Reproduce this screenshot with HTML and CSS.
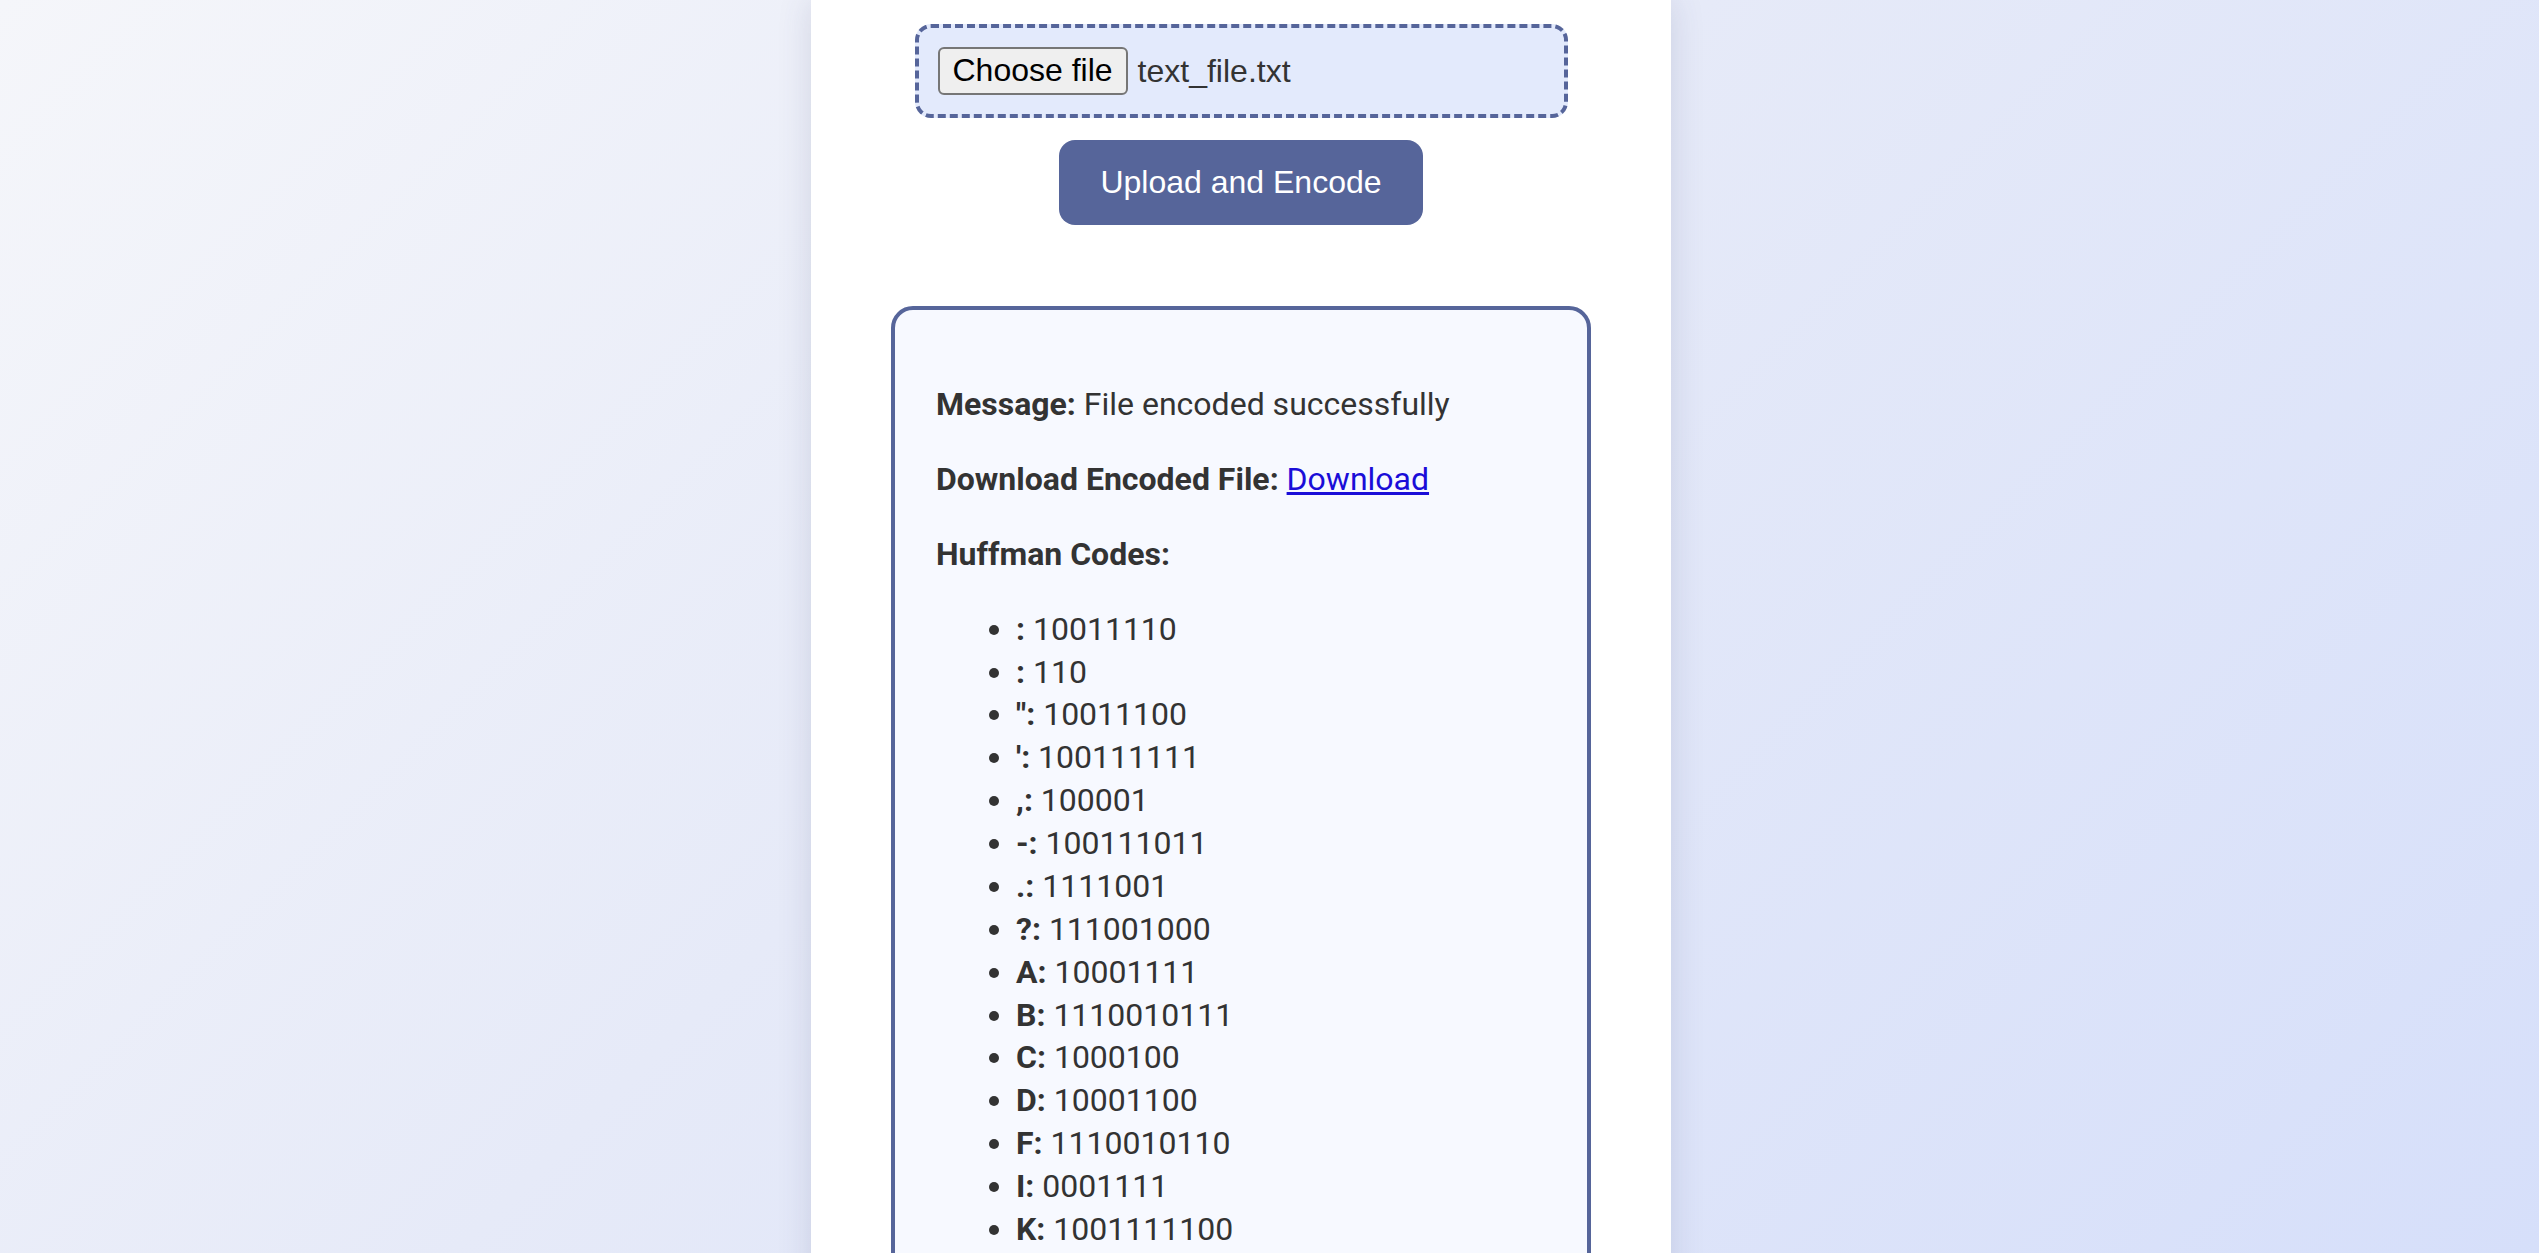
FILE: index.html
```html
<!DOCTYPE html>
<html lang="en">
<head>
<meta charset="utf-8">
<title>Huffman Encoder</title>
<link rel="stylesheet" href="styles.css">
</head>
<body>
<main class="card">
  <form class="upload-form">
    <div class="file-box">
      <label class="file-input">
        <span class="file-btn">Choose file</span>
        <span class="file-name">text_file.txt</span>
      </label>
    </div>
    <button type="button" class="upload-btn">Upload and Encode</button>
  </form>
  <section class="result">
    <p><strong>Message:</strong> File encoded successfully</p>
    <p><strong>Download Encoded File:</strong> <a href="#">Download</a></p>
    <p><strong>Huffman Codes:</strong></p>
    <ul class="codes">
      <li><strong>:</strong> 10011110</li>
      <li><strong>:</strong> 110</li>
      <li><strong>":</strong> 10011100</li>
      <li><strong>':</strong> 100111111</li>
      <li><strong>,:</strong> 100001</li>
      <li><strong>-:</strong> 100111011</li>
      <li><strong>.:</strong> 1111001</li>
      <li><strong>?:</strong> 111001000</li>
      <li><strong>A:</strong> 10001111</li>
      <li><strong>B:</strong> 1110010111</li>
      <li><strong>C:</strong> 1000100</li>
      <li><strong>D:</strong> 10001100</li>
      <li><strong>F:</strong> 1110010110</li>
      <li><strong>I:</strong> 0001111</li>
      <li><strong>K:</strong> 1001111100</li>
      <li><strong>L:</strong> 1001111101</li>
      <li><strong>M:</strong> 10001101</li>
    </ul>
  </section>
</main>
</body>
</html>
```

FILE: styles.css
```css
html, body {
  margin: 0;
  height: 100%;
}

body {
  background: linear-gradient(135deg, #f5f6fa 0%, #e6eaf8 45%, #d6dffa 100%);
  background-attachment: fixed;
  font-family: Roboto, "Liberation Sans", Arial, sans-serif;
  color: #333;
  font-size: 32px;
  line-height: 1.34;
  display: flex;
  justify-content: center;
  align-items: flex-start;
  padding-right: 57px;
  overflow: hidden;
}

.card {
  width: 860px;
  box-sizing: border-box;
  background: #fff;
  padding: 24px 80px 80px;
  box-shadow: 0 0 32px rgba(60, 70, 110, 0.16);
  display: flex;
  flex-direction: column;
  align-items: center;
  min-height: 1600px;
}

.upload-form {
  display: flex;
  flex-direction: column;
  align-items: center;
}

.file-box {
  width: 653px;
  box-sizing: border-box;
  padding: 19px;
  border: 4px dashed #56659a;
  border-radius: 16px;
  background: #e3eafc;
}

.file-input {
  display: flex;
  align-items: center;
  font-family: "Liberation Sans", Arial, sans-serif;
  font-size: 32px;
  line-height: normal;
  color: #333;
}

.file-btn {
  display: inline-block;
  box-sizing: border-box;
  height: 48px;
  padding: 3px 13px;
  border: 2px solid #767676;
  border-radius: 6px;
  background: #efefef;
  color: #000;
  margin-right: 10px;
}

.upload-btn {
  margin-top: 22px;
  padding: 24px 41px;
  font-family: "Liberation Sans", Arial, sans-serif;
  font-size: 32px;
  line-height: normal;
  color: #fff;
  background: #56659a;
  border: none;
  border-radius: 16px;
}

.result {
  margin-top: 81px;
  width: 100%;
  box-sizing: border-box;
  border: 4px solid #56659a;
  border-radius: 22px;
  background: #f7f9ff;
  padding: 41px;
}

.result p {
  margin: 32px 0;
}

.result a {
  color: #1a0dd8;
}

.codes {
  margin: 32px 0;
  padding-left: 80px;
}
```
